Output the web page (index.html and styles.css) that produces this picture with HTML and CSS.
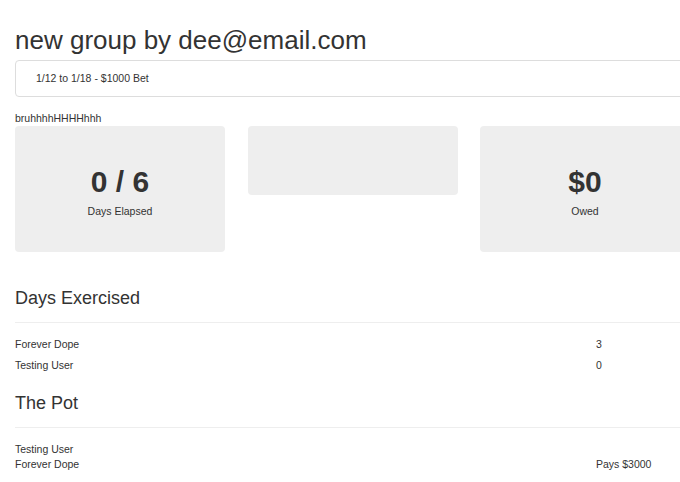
FILE: index.html
```html
<!DOCTYPE html>
<html>
<head>
<meta charset="utf-8">
<link rel="stylesheet" href="styles.css">
</head>
<body>
<div class="page">
  <h1 class="title">new group by dee@email.com</h1>
  <div class="panel">1/12 to 1/18 - $1000 Bet</div>
  <div class="note">bruhhhhHHHHhhh</div>
  <div class="cards">
    <div class="card">
      <div class="big">0 / 6</div>
      <div class="label">Days Elapsed</div>
    </div>
    <div class="card empty"></div>
    <div class="card">
      <div class="big">$0</div>
      <div class="label">Owed</div>
    </div>
  </div>
  <h3 class="section">Days Exercised</h3>
  <hr class="rule spaced-rule">
  <div class="table spaced">
    <div class="name">Forever Dope</div><div class="val">3</div>
    <div class="name">Testing User</div><div class="val">0</div>
  </div>
  <h3 class="section pot">The Pot</h3>
  <hr class="rule">
  <div class="table tight">
    <div class="name">Testing User</div><div class="val"></div>
    <div class="name">Forever Dope</div><div class="val">Pays $3000</div>
  </div>
</div>
</body>
</html>
```
FILE: styles.css
```css
html, body {
  margin: 0;
  padding: 0;
  overflow: hidden;
  background: #fff;
}
body {
  font-family: "Liberation Sans", Arial, Helvetica, sans-serif;
  color: #333;
  font-size: 10.5px;
  line-height: 15px;
}
.page {
  width: 720px;
  padding: 0 15px;
}
.title {
  font-size: 26px;
  font-weight: normal;
  line-height: 30px;
  margin: 25px 0 5px;
}
.panel {
  border: 1px solid #ddd;
  border-radius: 4px;
  padding: 10px 20px;
  margin-bottom: 14px;
}
.note {
  line-height: 15px;
}
.cards {
  display: flex;
  gap: 22.5px;
  align-items: flex-start;
}
.card {
  width: 210px;
  background: #eee;
  border-radius: 4px;
  text-align: center;
  padding: 40px 0 33px;
  box-sizing: border-box;
  height: 126px;
}
.card.empty {
  height: 69px;
  padding: 0;
}
.big {
  font-size: 30px;
  font-weight: bold;
  line-height: 32px;
}
.label {
  margin-top: 6px;
}
.section {
  font-size: 18px;
  font-weight: normal;
  line-height: 20px;
  margin: 36px 0 14px;
}
.section.pot {
  margin-top: 17px;
}
.rule {
  border: 0;
  border-top: 1px solid #eee;
  margin: 0 0 14px;
}
.rule.spaced-rule {
  margin-bottom: 11px;
}
.table {
  display: grid;
  grid-template-columns: 581px auto;
}
.table.spaced > div {
  padding: 3px 0;
}
```
